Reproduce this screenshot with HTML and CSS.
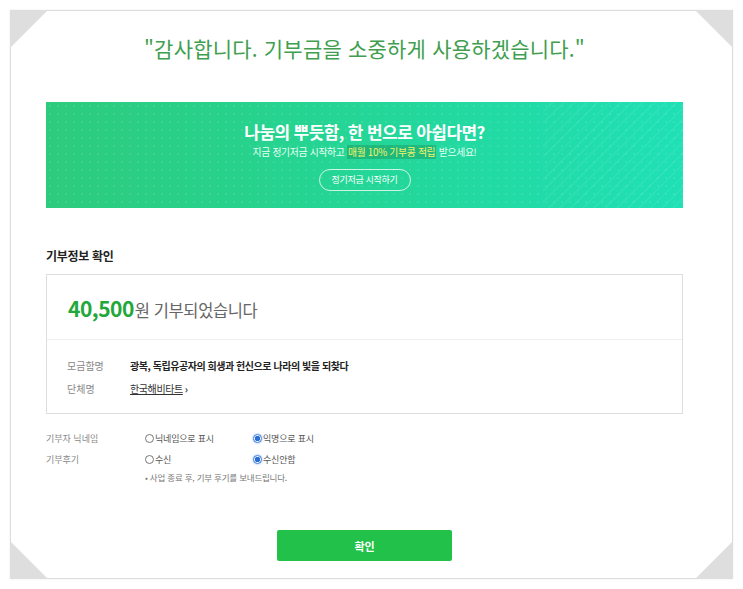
FILE: index.html
```html
<!DOCTYPE html>
<html lang="ko">
<head>
<meta charset="utf-8">
<title>기부 완료</title>
<link rel="stylesheet" href="styles.css">
</head>
<body>
<div class="frame">
  <span class="corner tl"></span>
  <span class="corner tr"></span>
  <span class="corner bl"></span>
  <span class="corner br"></span>
  <div class="content">
    <h1 class="thanks">"감사합니다. 기부금을 소중하게 사용하겠습니다."</h1>
    <div class="banner">
      <p class="banner-title">나눔의 뿌듯함, 한 번으로 아쉽다면?</p>
      <p class="banner-sub">지금 정기저금 시작하고 <span class="hl">매월 10% 기부콩 적립</span> 받으세요!</p>
      <span class="banner-btn">정기저금 시작하기</span>
    </div>
    <h2 class="section-title">기부정보 확인</h2>
    <div class="info-box">
      <div class="amount-row"><span class="amount">40,500</span><span class="amount-text">원 기부되었습니다</span></div>
      <div class="detail">
        <div class="detail-row"><span class="dlabel">모금함명</span><span class="dvalue">광복, 독립유공자의 희생과 헌신으로 나라의 빛을 되찾다</span></div>
        <div class="detail-row"><span class="dlabel">단체명</span><span class="dlink">한국해비타트</span><span class="arrow">›</span></div>
      </div>
    </div>
    <div class="options">
      <div class="opt-row">
        <span class="olabel">기부자 닉네임</span>
        <span class="radio"><i class="dot"></i>닉네임으로 표시</span>
        <span class="radio"><i class="dot on"></i>익명으로 표시</span>
      </div>
      <div class="opt-row">
        <span class="olabel">기부후기</span>
        <span class="radio"><i class="dot"></i>수신</span>
        <span class="radio"><i class="dot on"></i>수신안함</span>
      </div>
      <p class="note">• 사업 종료 후, 기부 후기를 보내드립니다.</p>
    </div>
    <div class="actions"><button class="confirm">확인</button></div>
  </div>
</div>
</body>
</html>
```
FILE: styles.css
```css
* { box-sizing: border-box; }
html, body { margin: 0; padding: 0; background: #fff; }
body { font-family: "Noto Sans CJK KR", "Noto Sans", sans-serif; width: 743px; height: 589px; overflow: hidden; }

.frame {
  position: relative;
  margin: 10px 0 0 10px;
  width: 723px;
  height: 569px;
  border: 1px solid #dcdcdc;
  box-shadow: 0 0 2px rgba(0,0,0,0.08);
  background: #fff;
}
.corner { position: absolute; width: 38px; height: 38px; background: #dedede; }
.corner.tl { left: -1px; top: -1px; clip-path: polygon(0 0, 100% 0, 0 100%); }
.corner.tr { right: -1px; top: -1px; clip-path: polygon(0 0, 100% 0, 100% 100%); }
.corner.bl { left: -1px; bottom: -1px; clip-path: polygon(0 0, 100% 100%, 0 100%); }
.corner.br { right: -1px; bottom: -1px; clip-path: polygon(100% 0, 100% 100%, 0 100%); }

.content { margin-left: 35px; width: 637px; padding-top: 22px; }

.thanks {
  margin: 0;
  text-align: center;
  font-size: 21px;
  line-height: 30px;
  font-weight: 400;
  color: #3f9e4f;
  letter-spacing: 0.2px;
}

.banner {
  margin-top: 39px;
  height: 106px;
  background:
    repeating-linear-gradient(135deg, rgba(255,255,255,0) 0 6px, rgba(255,255,255,0.05) 6px 8px) right bottom / 140px 106px no-repeat,
    radial-gradient(circle, rgba(255,255,255,0.08) 1px, transparent 1.5px) left top / 8px 8px,
    linear-gradient(90deg, #2dcb7c 0%, #24d697 50%, #1fe0b6 100%);
  display: flex;
  flex-direction: column;
  align-items: center;
  padding-top: 17px;
}
.banner-title {
  margin: 0;
  color: #fff;
  font-size: 17px;
  line-height: 25px;
  font-weight: 700;
  letter-spacing: -0.6px;
}
.banner-sub {
  margin: 1px 0 0;
  color: #e8fff3;
  font-size: 9.8px;
  line-height: 14px;
  letter-spacing: -0.3px;
}
.banner-sub .hl { color: #f3f26a; background: rgba(20,130,70,0.35); padding: 0 1px; }
.banner-btn {
  margin-top: 10px;
  width: 92px;
  height: 22px;
  border: 1px solid rgba(255,255,255,0.75);
  border-radius: 11px;
  color: #fff;
  font-size: 9px;
  line-height: 20px;
  text-align: center;
  letter-spacing: -0.3px;
}

.section-title {
  margin: 39px 0 0;
  font-size: 12px;
  line-height: 18px;
  font-weight: 700;
  color: #222;
  letter-spacing: -0.3px;
}

.info-box {
  margin-top: 9px;
  height: 140px;
  border: 1px solid #dedede;
}
.amount-row {
  height: 65px;
  padding: 20px 0 0 21px;
  border-bottom: 1px solid #f0f0f0;
  display: flex;
  align-items: baseline;
}
.amount { font-size: 21px; font-weight: 700; color: #22a73b; letter-spacing: -0.5px; line-height: 26px; }
.amount-text { font-size: 16.5px; color: #666; margin-left: 1px; letter-spacing: -0.4px; }

.detail { padding: 18px 0 0 20px; display: flex; flex-direction: column; gap: 8px; }
.detail-row { display: flex; align-items: center; height: 15px; }
.dlabel { width: 63px; font-size: 10px; color: #888; }
.dvalue { font-size: 10px; font-weight: 700; color: #222; letter-spacing: -0.45px; }
.dlink { font-size: 10px; color: #333; text-decoration: underline; letter-spacing: -0.4px; }
.arrow { font-size: 10px; color: #333; margin-left: 2px; font-weight: 700; }

.options { margin-top: 14px; }
.opt-row { display: flex; align-items: center; height: 21px; }
.olabel { width: 99px; font-size: 9px; color: #888; letter-spacing: 0; }
.radio { display: flex; align-items: center; width: 108px; font-size: 9px; color: #555; letter-spacing: -0.2px; }
.dot {
  width: 9px; height: 9px; border-radius: 50%;
  border: 1px solid #777; background: #fff; margin-right: 1px; flex: none;
}
.dot.on { border-color: #3b7bd8; background: radial-gradient(circle, #2a6fd4 0 2.5px, #fff 3px); box-shadow: 0 0 2px #6aa0ee; }
.note { margin: 0 0 0 99px; font-size: 8.5px; color: #777; line-height: 14px; letter-spacing: -0.2px; }

.actions { display: flex; justify-content: center; margin-top: 46px; }
.confirm {
  width: 175px; height: 31px;
  border: 0; border-radius: 2px;
  background: #22c24a;
  color: #fff; font-family: inherit; font-size: 11px; font-weight: 700;
}
```
